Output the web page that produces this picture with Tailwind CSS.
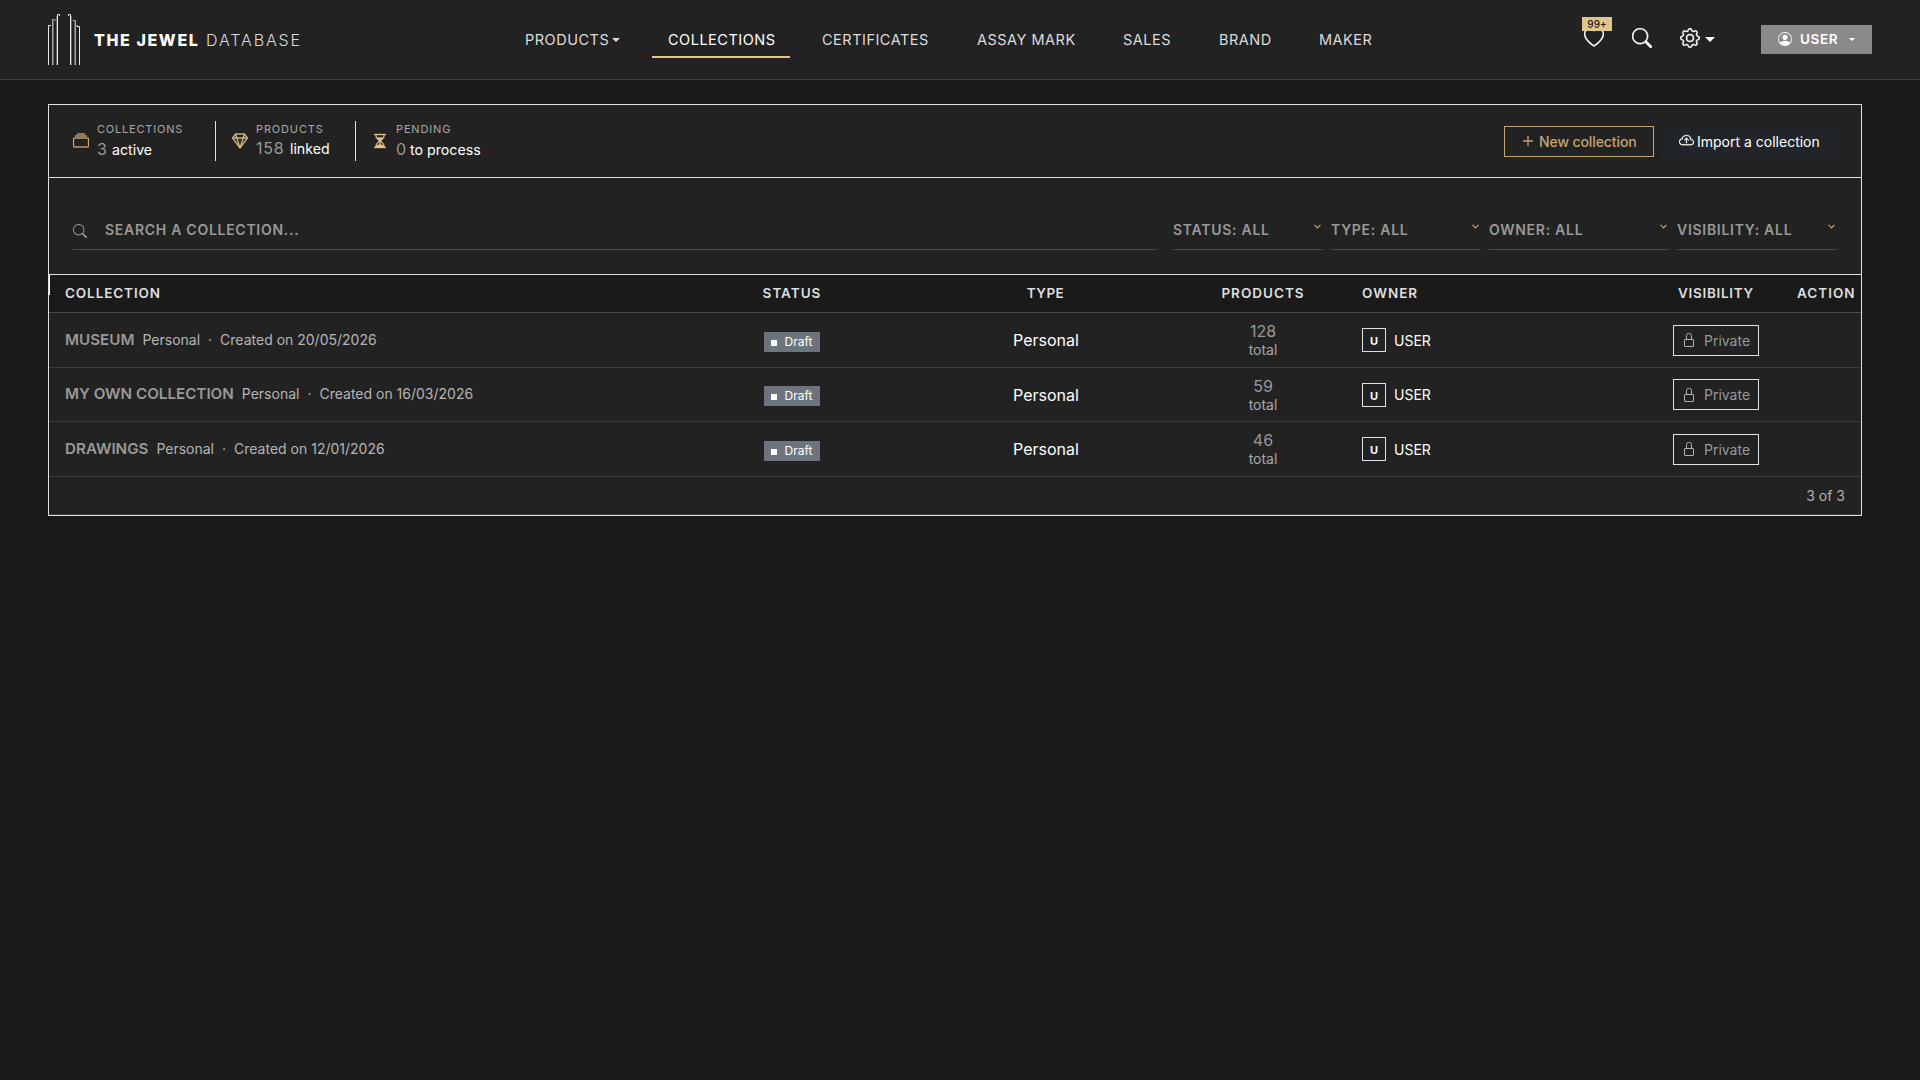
<!DOCTYPE html>
<html lang="en">
<head>
  <meta charset="UTF-8" />
  <meta name="viewport" content="width=device-width, initial-scale=1.0" />
  <title>Collections - The Jewel Database</title>
  <script src="https://cdn.jsdelivr.net/npm/@tailwindcss/browser@4"></script>
</head>
<body class="bg-[#1a1a1a] min-h-screen font-['Inter',sans-serif] text-white overflow-x-hidden">

  <!-- Top bar -->
  <header class="h-20 bg-[#222] border-b border-[#3a3a3a] flex items-center">
    <a href="#" class="flex items-center w-[461px] pl-12 shrink-0">
      <svg class="w-8 h-[52px] mr-[14px] -mt-0.5" viewBox="0 0 32 52" fill="none" stroke-width="1">
        <path stroke="#e8e8e8" d="M.5 52V12.500H3M9.500 52V1.500H11.500V3M31.500 52V13.500H29V12M22.500 52V1.500H20.500V3" />
        <path stroke="#a8a8a8" d="M4.500 52V6.500H7V8M27.500 52V7.500H25V8" />
        <path stroke="#666" d="M5.500 52V8M8.500 52V3M26.500 52V8M23.500 52V3" />
      </svg>
      <span class="text-[16px] leading-5 whitespace-nowrap tracking-[1.6px]"><b class="font-extrabold inline-block w-[112px] tracking-[1.6px]">THE JEWEL</b><span class="font-light text-[#ddd] tracking-[1.9px]">DATABASE</span></span>
    </a>
    <nav class="flex gap-4 pl-12 text-[14.500px] leading-5 tracking-[0.5px] text-[#dcdcdc] whitespace-nowrap">
      <a href="#" class="w-[127px] pl-4 h-9 pt-2 flex">PRODUCTS<span class="mt-2 ml-[3px] w-0 h-0 border-x-4 border-x-transparent border-t-4 border-t-[#dcdcdc]"></span></a>
      <a href="#" class="w-[138px] pl-4 h-9 pt-2 border-b-2 border-[#e0c48c] text-white">COLLECTIONS</a>
      <a href="#" class="w-[139px] pl-4 h-9 pt-2">CERTIFICATES</a>
      <a href="#" class="w-[130px] pl-4 h-9 pt-2">ASSAY MARK</a>
      <a href="#" class="w-[80px] pl-4 h-9 pt-2">SALES</a>
      <a href="#" class="w-[84px] pl-4 h-9 pt-2">BRAND</a>
      <a href="#" class="w-[86px] pl-4 h-9 pt-2">MAKER</a>
    </nav>
    <div class="ml-auto mr-12 flex items-center">
      <a href="#" class="relative mr-7 -mt-[3px]">
        <svg class="size-5" viewBox="0 0 16 16" fill="currentColor" stroke="currentColor" stroke-width=".25"><path d="m8 2.748-.717-.737C5.6.281 2.514.878 1.4 3.053c-.523 1.023-.641 2.5.314 4.385.92 1.815 2.834 3.989 6.286 6.357 3.452-2.368 5.365-4.542 6.286-6.357.955-1.886.838-3.362.314-4.385C13.486.878 10.4.28 8.717 2.01zM8 15C-7.333 4.868 3.279-3.04 7.824 1.143q.09.083.176.171a3 3 0 0 1 .176-.17C12.72-3.042 23.333 4.867 8 15" /></svg>
        <span class="absolute -top-[11px] -left-0.5 w-[30px] h-[14px] bg-[#e0c48c] text-[#1a1a1a] text-[10px] leading-[14px] font-medium text-center">99+</span>
      </a>
      <svg class="size-5 mr-7 -mt-[3px]" viewBox="0 0 16 16" fill="currentColor" stroke="currentColor" stroke-width=".25"><path d="M11.742 10.344a6.5 6.5 0 1 0-1.397 1.398h-.001q.044.06.098.115l3.85 3.85a1 1 0 0 0 1.415-1.414l-3.85-3.85a1 1 0 0 0-.115-.1zM12 6.5a5.500 5.500 0 1 1-11 0 5.500 5.500 0 0 1 11 0" /></svg>
      <svg class="size-5 -mt-[3px]" viewBox="0 0 16 16" fill="currentColor" stroke="currentColor" stroke-width=".25"><path d="M8 4.754a3.246 3.246 0 1 0 0 6.492 3.246 3.246 0 0 0 0-6.492M5.754 8a2.246 2.246 0 1 1 4.492 0 2.246 2.246 0 0 1-4.492 0" /><path d="M9.796 1.343c-.527-1.79-3.065-1.79-3.592 0l-.094.319a.873.873 0 0 1-1.255.52l-.292-.16c-1.64-.892-3.433.902-2.54 2.541l.159.292a.873.873 0 0 1-.52 1.255l-.319.094c-1.79.527-1.79 3.065 0 3.592l.319.094a.873.873 0 0 1 .52 1.255l-.16.292c-.892 1.64.901 3.434 2.541 2.54l.292-.159a.873.873 0 0 1 1.255.52l.094.319c.527 1.79 3.065 1.79 3.592 0l.094-.319a.873.873 0 0 1 1.255-.52l.292.16c1.64.893 3.434-.902 2.54-2.541l-.159-.292a.873.873 0 0 1 .52-1.255l.319-.094c1.79-.527 1.79-3.065 0-3.592l-.319-.094a.873.873 0 0 1-.52-1.255l.16-.292c.893-1.64-.902-3.433-2.541-2.54l-.292.159a.873.873 0 0 1-1.255-.52zm-2.633.283c.246-.835 1.428-.835 1.674 0l.094.319a1.873 1.873 0 0 0 2.693 1.115l.291-.16c.764-.415 1.6.42 1.184 1.185l-.159.292a1.873 1.873 0 0 0 1.116 2.692l.318.094c.835.246.835 1.428 0 1.674l-.319.094a1.873 1.873 0 0 0-1.115 2.693l.16.291c.415.764-.42 1.6-1.185 1.184l-.291-.159a1.873 1.873 0 0 0-2.693 1.116l-.094.318c-.246.835-1.428.835-1.674 0l-.094-.319a1.873 1.873 0 0 0-2.692-1.115l-.292.16c-.764.415-1.6-.42-1.184-1.185l.159-.291A1.873 1.873 0 0 0 1.945 8.93l-.319-.094c-.835-.246-.835-1.428 0-1.674l.319-.094A1.873 1.873 0 0 0 3.06 4.377l-.16-.292c-.415-.764.42-1.6 1.185-1.184l.292.159a1.873 1.873 0 0 0 2.692-1.115z" /></svg>
      <span class="ml-[5px] w-0 h-0 border-x-5 border-x-transparent border-t-5 border-t-white"></span>
      <button class="ml-[46px] w-[111px] h-[29px] bg-[#8a8a8a] flex items-center pl-[17px] text-[13.500px] font-semibold tracking-[0.6px]">
        <svg class="size-[14px] mr-2 -mt-0.5" viewBox="0 0 16 16" fill="currentColor"><path d="M11 6a3 3 0 1 1-6 0 3 3 0 0 1 6 0" /><path d="M0 8a8 8 0 1 1 16 0A8 8 0 0 1 0 8m8-7a7 7 0 0 0-5.468 11.37C3.242 11.226 4.805 10 8 10s4.757 1.225 5.468 2.37A7 7 0 0 0 8 1" /></svg>
        <span class="w-[49px] text-left -mt-px">USER</span>
        <span class="w-0 h-0 border-x-3 border-x-transparent border-t-3 border-t-white"></span>
      </button>
    </div>
  </header>

  <main class="mt-6 ml-12 w-[1814px] border border-[#dee2e6] bg-[#222]">

    <!-- Stats and actions -->
    <section class="h-[73px] border-b border-[#dee2e6] flex items-center pl-6 pr-6 pb-px">
      <div class="flex items-center w-[143px] h-10 border-r border-[#dee2e6]">
        <svg class="size-4 mr-2 text-[#cfae77]" viewBox="0 0 16 16" fill="currentColor" stroke="currentColor" stroke-width=".3"><path d="M2.500 3.500a.5.5 0 0 1 0-1h11a.5.5 0 0 1 0 1zm2-2a.5.5 0 0 1 0-1h7a.5.5 0 0 1 0 1zM0 13a1.500 1.500 0 0 0 1.500 1.500h13A1.500 1.500 0 0 0 16 13V6a1.500 1.500 0 0 0-1.500-1.500h-13A1.500 1.500 0 0 0 0 6zm1.500.5A.5.5 0 0 1 1 13V6a.5.5 0 0 1 .5-.5h13a.5.5 0 0 1 .5.5v7a.5.5 0 0 1-.5.5z" /></svg>
        <div class="pt-0.5">
          <div class="text-[11px] leading-4 tracking-[0.8px] text-[#a8a8a8]">COLLECTIONS</div>
          <div class="text-[14.200px] leading-6"><span class="text-[16px] text-[#999] inline-block w-[15px]">3</span>active</div>
        </div>
      </div>
      <div class="flex items-center w-[140px] h-10 pl-4 border-r border-[#dee2e6]">
        <svg class="size-4 mr-2 text-[#e0c48c]" viewBox="0 0 16 16" fill="currentColor" stroke="currentColor" stroke-width=".3"><path d="M3.100.7a.5.5 0 0 1 .4-.2h9a.5.5 0 0 1 .4.2l2.976 3.974c.149.185.156.45.01.644L8.400 15.300a.5.5 0 0 1-.8 0L.1 5.300a.5.5 0 0 1 0-.6zm11.386 3.785-1.806-2.410-.776 2.413zm-3.633.004.961-2.989H4.186l.963 2.995zM5.470 5.495 8 13.366l2.532-7.876zm-1.371-.999-.78-2.422-1.818 2.425zM1.499 5.500l5.113 6.817-2.192-6.820zm7.889 6.817 5.123-6.830-2.928.002z" /></svg>
        <div class="pt-0.5">
          <div class="text-[11px] leading-4 tracking-[0.85px] text-[#a8a8a8]">PRODUCTS</div>
          <div class="text-[14.200px] leading-6 -mt-px mb-px"><span class="text-[16px] text-[#999] tracking-[0.8px] inline-block w-[34px]">158</span>linked</div>
        </div>
      </div>
      <div class="flex items-center h-10 pl-4">
        <svg class="size-4 mr-2 text-[#e0c48c]" viewBox="0 0 16 16" fill="currentColor" stroke="currentColor" stroke-width=".3"><path d="M2.500 15a.5.5 0 1 1 0-1h1v-1a4.500 4.500 0 0 1 2.557-4.060c.29-.139.443-.377.443-.59v-.7c0-.213-.154-.451-.443-.59A4.500 4.500 0 0 1 3.500 3V2h-1a.5.5 0 0 1 0-1h11a.5.5 0 0 1 0 1h-1v1a4.500 4.500 0 0 1-2.557 4.060c-.29.139-.443.377-.443.59v.7c0 .213.154.451.443.59A4.500 4.500 0 0 1 12.500 13v1h1a.5.5 0 0 1 0 1zm2-13v1c0 .537.12 1.045.337 1.500h6.326c.216-.455.337-.963.337-1.500V2zm3 6.350c0 .701-.478 1.236-1.011 1.492A3.500 3.500 0 0 0 4.500 13s.866-1.299 3-1.480zm1 0v3.170c2.134.181 3 1.480 3 1.480a3.500 3.500 0 0 0-1.989-3.158C8.978 9.586 8.500 9.052 8.500 8.351z" /></svg>
        <div class="pt-0.5">
          <div class="text-[11px] leading-4 tracking-[0.85px] text-[#a8a8a8]">PENDING</div>
          <div class="text-[14.200px] leading-6"><span class="text-[16px] text-[#999] inline-block w-[14px]">0</span>to process</div>
        </div>
      </div>
      <div class="ml-auto mt-0.5 flex gap-2 text-[14px] leading-5 whitespace-nowrap">
        <button class="w-[150px] h-[31px] border border-[#c4a473] text-[#c4a473] flex items-center pl-[17px] font-medium tracking-[-0.1px]">
          <svg class="size-3 mr-[5px] -mt-0.5" viewBox="0 0 12 12" fill="none" stroke="currentColor" stroke-width="1.300"><path d="M6 1v10M1 6h10" /></svg>
          New collection
        </button>
        <button class="w-[175px] h-[31px] bg-[#212529] flex items-center pl-[17px]">
          <svg class="size-[15px] mr-[3px] -mt-0.5" viewBox="0 0 16 16" fill="currentColor" stroke="currentColor" stroke-width=".3"><path d="M7.646 5.146a.5.5 0 0 1 .708 0l2 2a.5.5 0 0 1-.708.708L8.500 6.707V10.500a.5.5 0 0 1-1 0V6.707L6.354 7.854a.5.5 0 1 1-.708-.708z" /><path d="M4.406 3.342A5.530 5.530 0 0 1 8 2c2.690 0 4.923 2 5.166 4.579C14.758 6.804 16 8.137 16 9.773 16 11.569 14.502 13 12.687 13H3.781C1.708 13 0 11.366 0 9.318c0-1.763 1.266-3.223 2.942-3.593.143-.863.698-1.723 1.464-2.383m.653.757c-.757.653-1.153 1.440-1.153 2.056v.448l-.445.049C2.064 6.805 1 7.952 1 9.318 1 10.785 2.230 12 3.781 12h8.906C13.980 12 15 10.988 15 9.773c0-1.216-1.020-2.228-2.313-2.228h-.5v-.5C12.188 4.825 10.328 3 8 3a4.530 4.530 0 0 0-2.941 1.100z" /></svg>
          Import a collection
        </button>
      </div>
    </section>

    <!-- Search and filters -->
    <section class="h-24 px-6 pt-8 flex text-[14px] leading-5 font-semibold tracking-[0.72px] text-[#999] whitespace-nowrap">
      <div class="w-[1084px] h-10 mr-4 pt-[10px] flex border-b border-[#4a4a4a]">
        <svg class="size-[14px] mt-1 mr-[18px]" viewBox="0 0 16 16" fill="currentColor"><path d="M11.742 10.344a6.500 6.500 0 1 0-1.397 1.398h-.001q.044.06.098.115l3.850 3.850a1 1 0 0 0 1.415-1.414l-3.850-3.850a1 1 0 0 0-.115-.1zM12 6.500a5.500 5.500 0 1 1-11 0 5.500 5.500 0 0 1 11 0" /></svg>
        SEARCH A COLLECTION...
      </div>
      <div class="w-[150px] h-10 mr-2 pt-[10px] pr-[2px] flex justify-between border-b border-[#4a4a4a]">STATUS: ALL
        <svg class="w-[7px] h-[5px] mt-1" viewBox="0 0 7 5" fill="none" stroke="#c4a473" stroke-width="1.200"><path d="M.5.8l3 3 3-3" /></svg>
      </div>
      <div class="w-[150px] h-10 mr-2 pt-[10px] pr-[2px] flex justify-between border-b border-[#4a4a4a]">TYPE: ALL
        <svg class="w-[7px] h-[5px] mt-1" viewBox="0 0 7 5" fill="none" stroke="#c4a473" stroke-width="1.200"><path d="M.5.8l3 3 3-3" /></svg>
      </div>
      <div class="w-[180px] h-10 mr-2 pt-[10px] pr-[2px] flex justify-between border-b border-[#4a4a4a]">OWNER: ALL
        <svg class="w-[7px] h-[5px] mt-1" viewBox="0 0 7 5" fill="none" stroke="#c4a473" stroke-width="1.200"><path d="M.5.8l3 3 3-3" /></svg>
      </div>
      <div class="w-[160px] h-10 pt-[10px] pr-[2px] flex justify-between border-b border-[#4a4a4a]">VISIBILITY: ALL
        <svg class="w-[7px] h-[5px] mt-1" viewBox="0 0 7 5" fill="none" stroke="#c4a473" stroke-width="1.200"><path d="M.5.8l3 3 3-3" /></svg>
      </div>
    </section>

    <!-- Table -->
    <section>
      <div class="relative h-[39px] pb-0.5 bg-[#1a1a1a] border-t border-t-[#dee2e6] border-b border-b-[#4a4a4a] grid grid-cols-[657px_171px_336px_99px_349px_110px_90px] items-center text-center text-[13.500px] leading-5 font-semibold tracking-[1px] text-[#dedede]">
        <span class="absolute left-0 top-0 w-px h-5 bg-white"></span>
        <div class="pl-4 text-left tracking-[0.9px]">COLLECTION</div>
        <div class="pl-px">STATUS</div>
        <div class="pl-px tracking-[0.5px]">TYPE</div>
        <div class="pl-px">PRODUCTS</div>
        <div class="pl-[50px] text-left">OWNER</div>
        <div class="tracking-[0.7px]">VISIBILITY</div>
        <div class="pl-[26px] text-left">ACTION</div>
      </div>
      <div id="rows"></div>
      <div class="h-[38px] border-b border-[#3a3a3a] pr-4 text-right text-[14px] leading-[38px] text-[#b0b0b0]">3 of 3</div>
    </section>
  </main>

  <script>
    const collections = [
      { name: "MUSEUM", created: "20/05/2026", total: 128, height: "h-[55px]" },
      { name: "MY OWN COLLECTION", created: "16/03/2026", total: 59, height: "h-[54px]" },
      { name: "DRAWINGS", created: "12/01/2026", total: 46, height: "h-[55px]" }
    ];

    document.getElementById("rows").innerHTML = collections.map(c => `
      <div class="${c.height} border-b border-[#3a3a3a] grid grid-cols-[657px_171px_336px_99px_349px_110px_90px] items-center text-center">
        <div class="pl-4 pb-px flex items-baseline text-[14px] leading-5 text-[#b5b5b5] whitespace-pre"><b class="text-[15.200px] font-semibold text-[#999] mr-2">${c.name}</b>Personal<span class="mx-2">·</span>Created on ${c.created}</div>
        <div class="flex justify-center pt-[3px]"><span class="w-14 h-5 bg-[#6c757d] flex items-center pl-[7px] text-[12px] leading-5"><i class="size-1.5 bg-white mr-2 mt-0.5"></i>Draft</span></div>
        <div class="pl-0.5 text-[16px] leading-6">Personal</div>
        <div class="text-[#999] pt-px pl-px"><div class="text-[16px] leading-[19px]">${c.total}</div><div class="text-[14px] leading-[18px] text-[#a8a8a8]">total</div></div>
        <div class="pl-[50px] flex items-center text-[14px] leading-5"><span class="size-6 border border-[#dee2e6] mr-2 text-[11px] leading-6 font-bold">U</span><span class="pt-px">USER</span></div>
        <div class="flex justify-center"><span class="w-[86px] h-[31px] border border-[#dee2e6] flex items-center pl-[10px] text-[14px] text-[#999]"><svg class="w-[10px] h-[14px] mr-[10px]" viewBox="0 0 10 14" fill="none" stroke="#b0b0b0" stroke-width="1"><path d="M2.500 6.500V2.500a2 2 0 0 1 2-2h1a2 2 0 0 1 2 2V6.500M1 6.500h8a.5.5 0 0 1 .5.5v6a.5.5 0 0 1-.5.5h-8a.5.5 0 0 1-.5-.5v-6a.5.5 0 0 1 .5-.5z" /></svg>Private</span></div>
        <div></div>
      </div>`).join("");
  </script>
</body>
</html>
